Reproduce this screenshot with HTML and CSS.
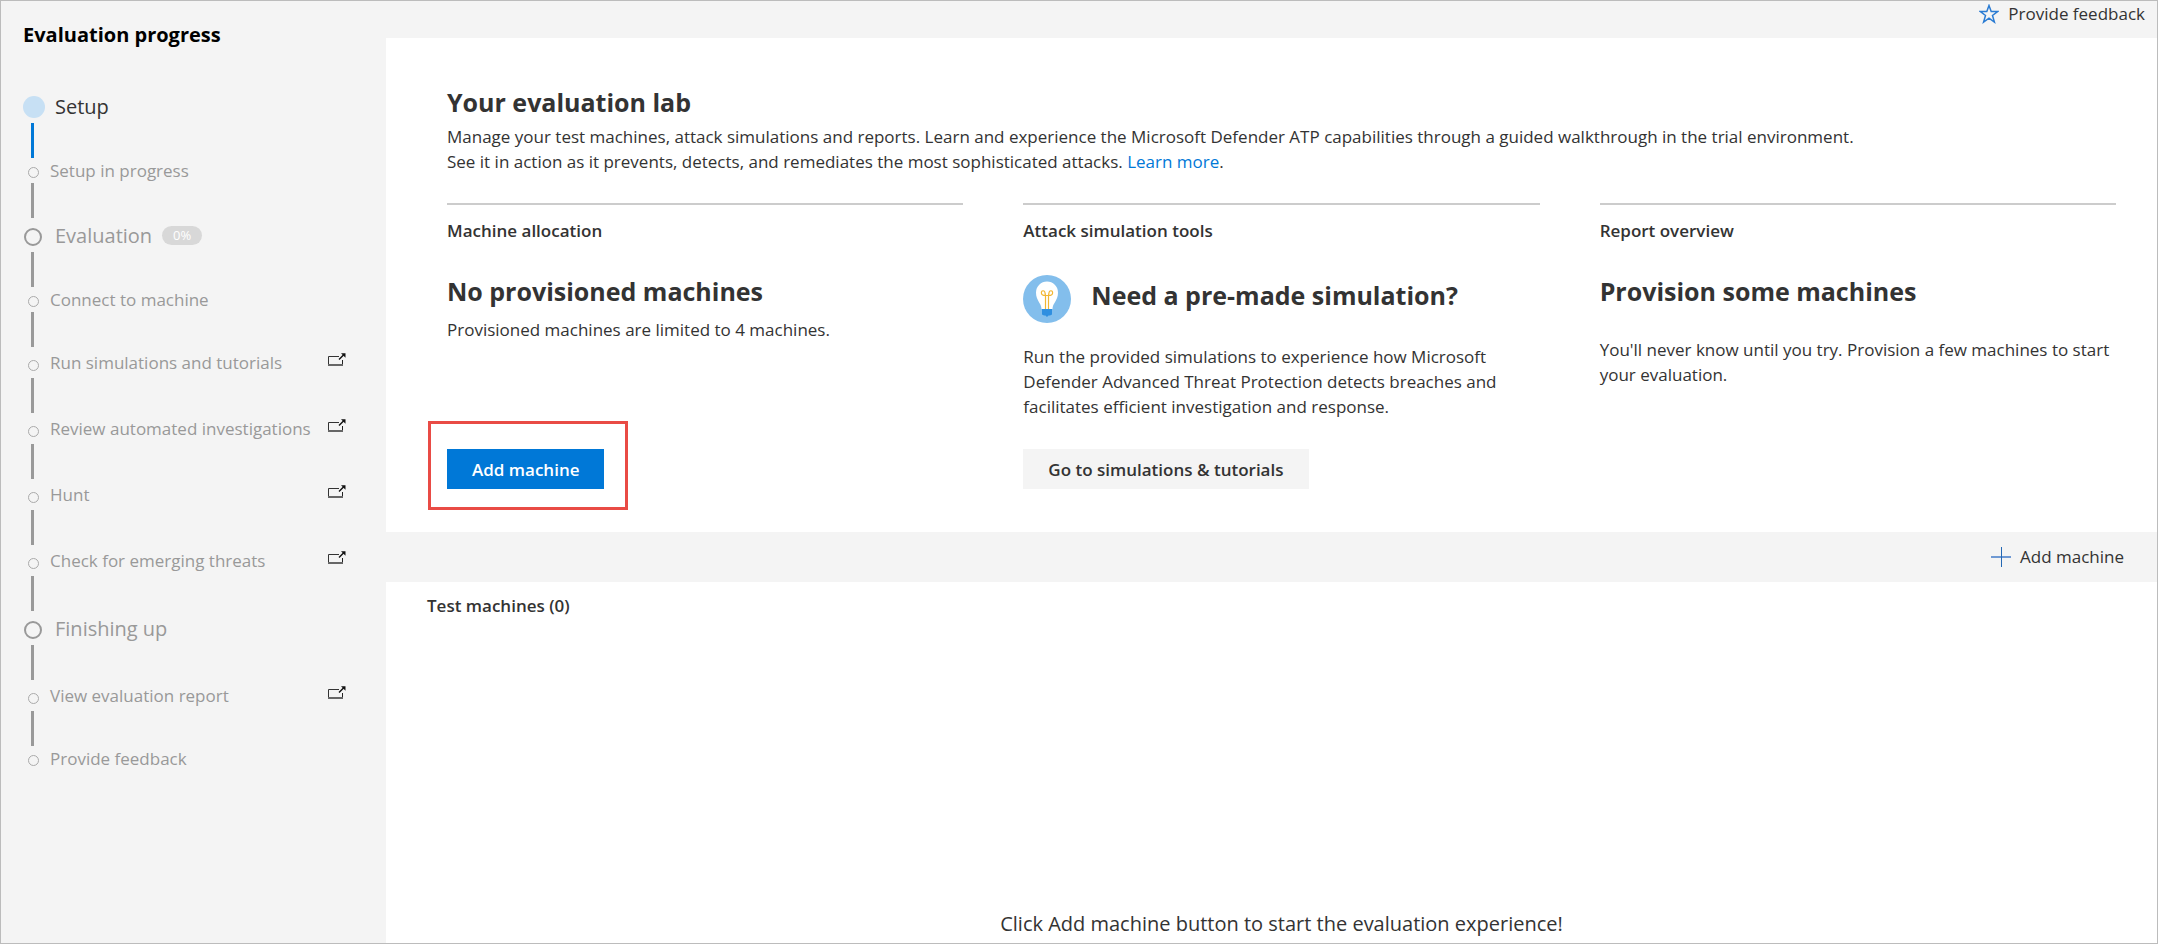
FILE: index.html
```html
<!DOCTYPE html>
<html lang="en">
<head>
<meta charset="utf-8">
<title>Evaluation lab</title>
<link rel="stylesheet" href="styles.css">
</head>
<body>
<svg class="sprite" aria-hidden="true">
  <symbol id="open" viewBox="0 0 18 14">
    <path d="M11 3.500H.5V12" fill="none" stroke="#333" stroke-width="1"/>
    <path d="M14.500 12V7" stroke="#222" stroke-width="1"/>
    <path d="M0 12H15" stroke="#666" stroke-width="2"/>
    <path d="M11 6.500L16 1.500" stroke="#111" stroke-width="1.500"/>
    <path d="M13 .3h4.500v4.500z" fill="#111"/>
  </symbol>
</svg>
<div class="app">
  <aside class="sidebar">
    <h2 class="sidebar-title">Evaluation progress</h2>
    <ol class="steps">
      <li class="step step-main step-current"><div class="row"><span class="dot"></span><span class="name">Setup</span></div></li>
      <li class="step"><div class="row"><span class="dot"></span><span class="name">Setup in progress</span></div></li>
      <li class="step step-main"><div class="row"><span class="dot"></span><span class="name">Evaluation</span><span class="badge">0%</span></div></li>
      <li class="step"><div class="row"><span class="dot"></span><span class="name">Connect to machine</span></div></li>
      <li class="step step-link"><a class="row" href="#"><span class="dot"></span><span class="name">Run simulations and tutorials</span><svg class="open"><use href="#open"/></svg></a></li>
      <li class="step step-link"><a class="row" href="#"><span class="dot"></span><span class="name">Review automated investigations</span><svg class="open"><use href="#open"/></svg></a></li>
      <li class="step step-link"><a class="row" href="#"><span class="dot"></span><span class="name">Hunt</span><svg class="open"><use href="#open"/></svg></a></li>
      <li class="step step-link"><a class="row" href="#"><span class="dot"></span><span class="name">Check for emerging threats</span><svg class="open"><use href="#open"/></svg></a></li>
      <li class="step step-main"><div class="row"><span class="dot"></span><span class="name">Finishing up</span></div></li>
      <li class="step step-link"><a class="row" href="#"><span class="dot"></span><span class="name">View evaluation report</span><svg class="open"><use href="#open"/></svg></a></li>
      <li class="step"><div class="row"><span class="dot"></span><span class="name">Provide feedback</span></div></li>
    </ol>
  </aside>
  <main class="main">
    <div class="topbar">
      <button class="command" type="button">
        <svg class="star" viewBox="0 0 20 20"><path d="M10 1.500L12.200 7.600H18.600L13.500 11.500L15.400 18L10 14.100L4.600 18L6.500 11.500L1.400 7.600H7.800Z" fill="none" stroke="#2b7cd3" stroke-width="1.500"/></svg>
        Provide feedback
      </button>
    </div>
    <section class="overview">
      <h1 class="heading">Your evaluation lab</h1>
      <p class="text">Manage your test machines, attack simulations and reports. Learn and experience the Microsoft Defender ATP capabilities through a guided walkthrough in the trial environment.<br>See it in action as it prevents, detects, and remediates the most sophisticated attacks. <a class="link" href="#">Learn more</a>.</p>
      <div class="cards">
        <article class="card">
          <h3 class="label">Machine allocation</h3>
          <h2 class="heading card-heading">No provisioned machines</h2>
          <p class="text">Provisioned machines are limited to 4 machines.</p>
          <div class="action highlight"><button class="button primary" type="button">Add machine</button></div>
        </article>
        <article class="card">
          <h3 class="label">Attack simulation tools</h3>
          <div class="tip">
            <svg class="bulb" viewBox="0 0 48 48">
              <circle cx="24" cy="24" r="24" fill="#83beec"/>
              <path d="M18.500 34c0-6-5.500-8-5.500-16.500a11 11 0 0 1 22 0C35 26 29.500 28 29.500 34z" fill="#fff"/>
              <path d="M22.500 34V20M25.500 34V20M22.500 20.500c-6 0-4.500-6-1.500-4.500 1.500 1 1 3 1.500 4.500h3c.5-1.500 0-3.500 1.500-4.500 3-1.500 4.500 4.500-1.500 4.500" fill="none" stroke="#f2b632" stroke-width="1.200"/>
              <path d="M19 34h10v5.500l-2 1h-1.500L24 42l-1.500-1.500H21l-2-1z" fill="#2f8fe0"/>
            </svg>
            <h2 class="heading">Need a pre-made simulation?</h2>
          </div>
          <p class="text narrow">Run the provided simulations to experience how Microsoft Defender Advanced Threat Protection detects breaches and facilitates efficient investigation and response.</p>
          <div class="action"><button class="button" type="button">Go to simulations &amp; tutorials</button></div>
        </article>
        <article class="card">
          <h3 class="label">Report overview</h3>
          <h2 class="heading card-heading">Provision some machines</h2>
          <p class="text spaced">You'll never know until you try. Provision a few machines to start your evaluation.</p>
        </article>
      </div>
    </section>
    <div class="toolbar">
      <button class="command" type="button">
        <svg class="plus" viewBox="0 0 20 20"><path d="M0 10h20" stroke="#6f99d3" stroke-width="2"/><path d="M10.500 0v20" stroke="#2468b4" stroke-width="1"/></svg>
        Add machine
      </button>
    </div>
    <section class="machines">
      <h3 class="label">Test machines (0)</h3>
      <p class="empty">Click Add machine button to start the evaluation experience!</p>
    </section>
  </main>
</div>
</body>
</html>
```
FILE: styles.css
```css
* { box-sizing: border-box; }

body {
  margin: 0;
  color: #333;
  background: #f4f4f4;
  font-family: "Open Sans", "Noto Sans", sans-serif;
  font-size: 17px;
  line-height: 25px;
}

h1, h2, h3, p, ol { margin: 0; padding: 0; }
button { font: inherit; color: inherit; border: 0; background: none; padding: 0; }
a { color: inherit; text-decoration: none; }
.sprite { position: absolute; width: 0; height: 0; }

.app {
  display: flex;
  min-height: 100vh;
  border: 1px solid #bcbcbc;
}

/* Sidebar */
.sidebar { flex: 0 0 385px; padding: 21px 40px 0 22px; }
.sidebar-title { color: #000; font-size: 20px; font-weight: 700; line-height: 26px; }
.steps { list-style: none; margin-top: 41px; color: #999; }
.step::after {
  content: "";
  display: block;
  width: 3px;
  height: 35px;
  margin-left: 8px;
  background: #999;
}
.step:last-child::after { display: none; }
.row { display: flex; align-items: center; height: 25px; }
.dot {
  flex: none;
  width: 11px;
  height: 11px;
  margin: 4px 11px 0 5px;
  border: 1px solid #aaa;
  border-radius: 50%;
}
.step-link .row { height: 31px; }
.step-link .dot { margin-top: 6px; }
.step-main .row { height: 34px; font-size: 20px; }
.step-main .dot {
  width: 18px;
  height: 18px;
  margin: 4px 13px 0 1px;
  border: 2px solid #999;
}
.step-current { color: #333; }
.step-current::after { background: #0078d7; }
.step-main.step-current .dot {
  width: 22px;
  height: 22px;
  margin: 2px 10px 0 0;
  border: 0;
  background: #c7e0f4;
}
.badge {
  width: 40px;
  height: 19px;
  margin-left: 10px;
  border-radius: 10px;
  background: #d8d8d8;
  color: #fff;
  font-size: 13px;
  line-height: 19px;
  text-align: center;
}
.open { width: 18px; height: 14px; margin: 0 0 6px auto; }

/* Command bars */
.main { flex: 1; display: flex; flex-direction: column; min-width: 0; }
.command { display: flex; align-items: center; gap: 9px; line-height: 24px; }
.topbar { display: flex; justify-content: flex-end; height: 37px; padding: 1px 12px 12px 0; }
.toolbar { display: flex; justify-content: flex-end; height: 50px; padding-right: 33px; }
.star { width: 20px; height: 20px; }
.plus { width: 20px; height: 20px; }

/* Overview */
.overview { padding: 47px 41px 22px 61px; background: #fff; }
.heading { font-size: 25px; font-weight: 700; line-height: 34px; }
.overview > .text { margin-top: 5px; }
.link { color: #0078d7; }
.cards {
  display: grid;
  grid-template-columns: repeat(3, 1fr);
  gap: 60px;
  margin-top: 29px;
}
.card {
  display: flex;
  flex-direction: column;
  align-items: flex-start;
  min-height: 307px;
  padding-top: 12px;
  border-top: 2px solid #ccc;
}
.label { font-size: 17px; font-weight: 600; line-height: 28px; }
.card-heading { margin: 29px 0 9px; }
.tip { display: flex; align-items: center; gap: 20px; margin: 30px 0 21px; }
.tip .heading { margin-bottom: 8px; }
.bulb { width: 48px; height: 48px; }
.narrow { padding-right: 40px; }
.spaced { margin-top: 20px; }
.action { margin: auto 0 21px; }
.highlight { margin: auto 0 0 -19px; padding: 25px 21px 18px 16px; border: 3px solid #e94b45; }
.button {
  height: 40px;
  padding: 0 25px;
  background: #f4f4f4;
  font-weight: 600;
}
.primary { background: #0078d7; color: #fff; }

/* Machine list */
.machines {
  flex: 1;
  display: flex;
  flex-direction: column;
  justify-content: space-between;
  padding: 10px 21px 6px 41px;
  background: #fff;
}
.empty { font-size: 20px; line-height: 26px; text-align: center; }
```
